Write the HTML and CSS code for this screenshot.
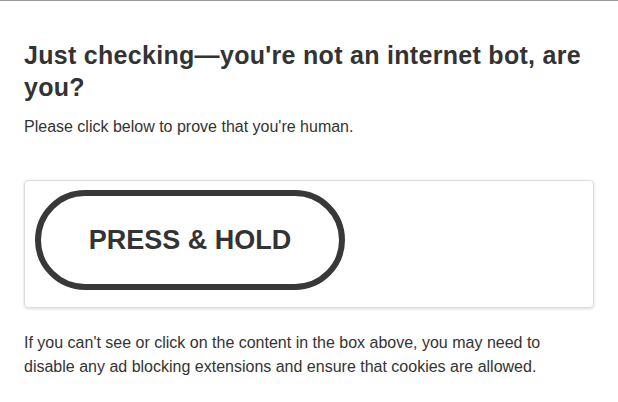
FILE: index.html
```html
<!DOCTYPE html>
<html lang="en">
<head>
<meta charset="utf-8">
<title>Just checking</title>
<link rel="stylesheet" href="styles.css">
</head>
<body>
<div class="page">
  <h1 class="title">Just checking—you're not an internet bot, are you?</h1>
  <p class="lead">Please click below to prove that you're human.</p>
  <div class="challenge">
    <div class="hold-btn">PRESS &amp; HOLD</div>
  </div>
  <p class="note">If you can't see or click on the content in the box above, you may need to disable any ad blocking extensions and ensure that cookies are allowed.</p>
</div>
</body>
</html>
```
FILE: styles.css
```css
html, body {
  margin: 0;
  padding: 0;
  background: #fff;
}
body {
  border-top: 1px solid #9a9a9a;
  font-family: "Liberation Sans", Arial, sans-serif;
  color: #333;
}
.page {
  padding: 38px 24px 24px;
}
.title {
  margin: 0;
  font-size: 25px;
  line-height: 32px;
  letter-spacing: 0.3px;
  font-weight: bold;
  color: #333;
}
.lead {
  margin: 13px 0 0;
  font-size: 16px;
  line-height: 22px;
}
.challenge {
  margin-top: 42px;
  height: 128px;
  border: 1px solid #dcdcdc;
  border-radius: 4px;
  box-shadow: 0 1px 3px rgba(0,0,0,0.15);
  padding: 9px 10px;
  box-sizing: border-box;
  display: flex;
  align-items: flex-start;
}
.hold-btn {
  width: 310px;
  height: 100px;
  box-sizing: border-box;
  border: 6px solid #383838;
  border-radius: 50px;
  display: flex;
  align-items: center;
  justify-content: center;
  font-size: 27px;
  font-weight: bold;
  color: #333;
}
.note {
  margin: 23px 0 0;
  font-size: 16px;
  line-height: 24px;
}
```
